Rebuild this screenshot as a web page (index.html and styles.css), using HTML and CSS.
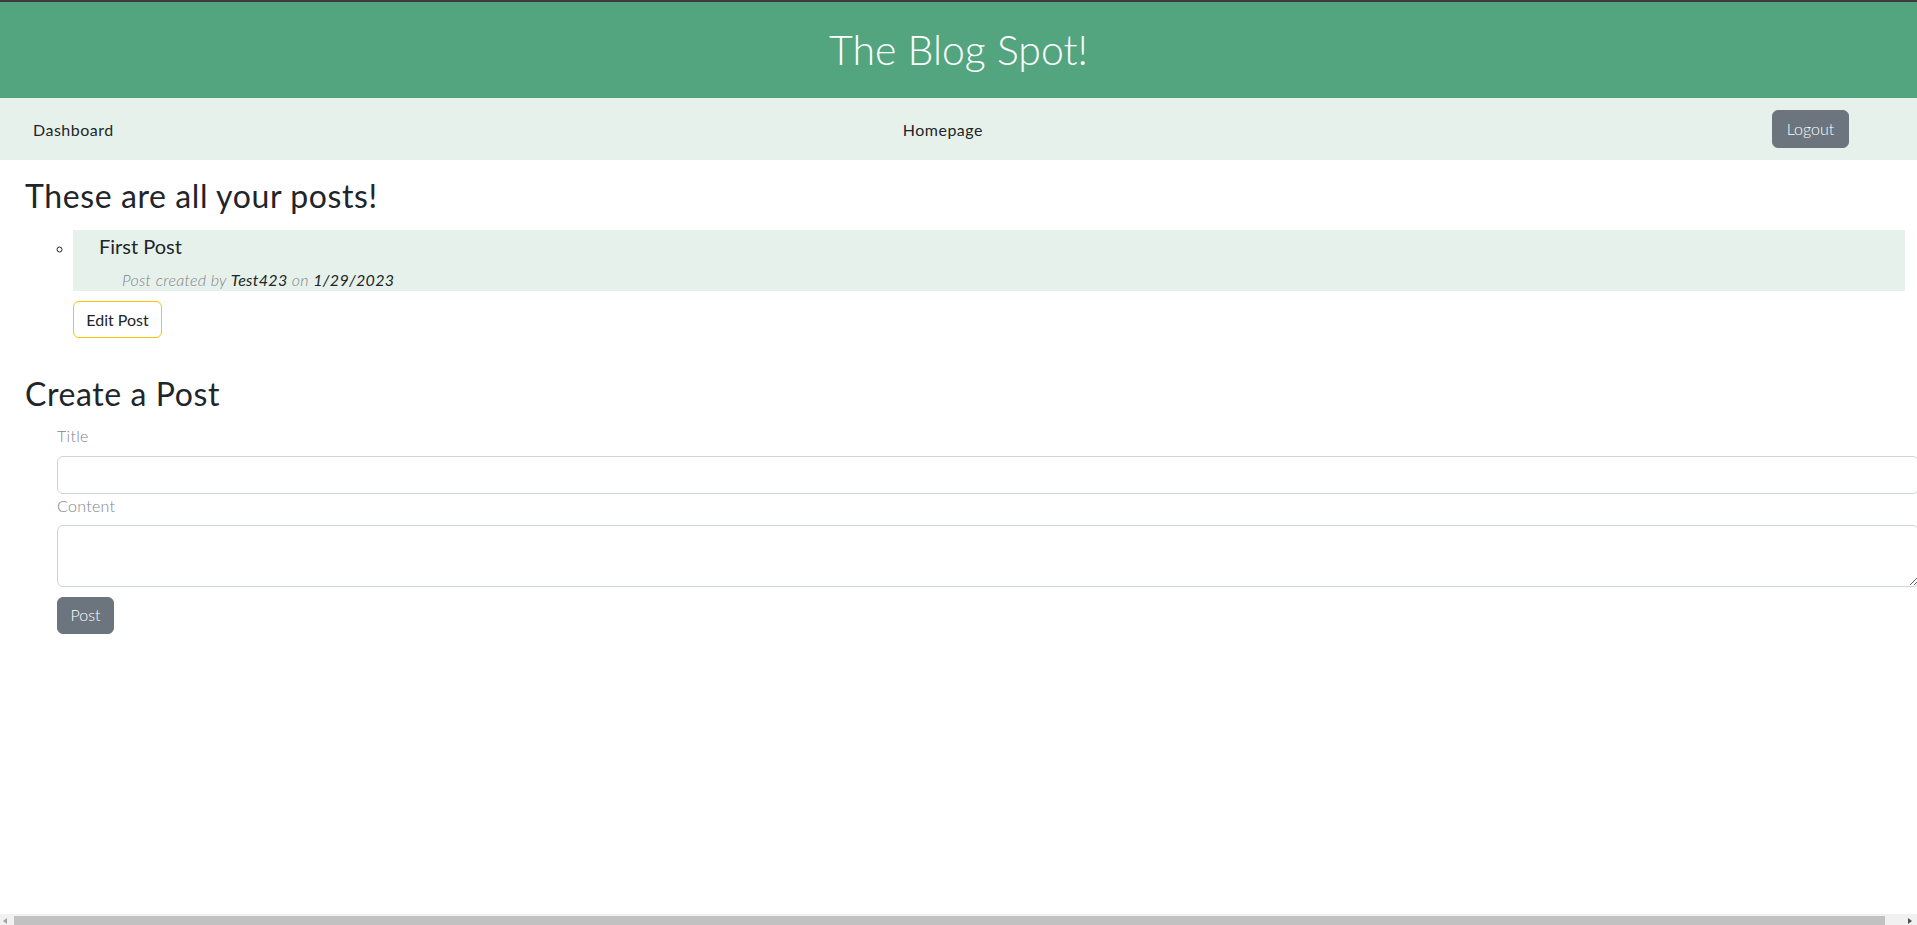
FILE: index.html
```html
<!DOCTYPE html>
<html lang="en">
<head>
<meta charset="utf-8">
<title>The Blog Spot!</title>
<link rel="stylesheet" href="styles.css">
</head>
<body>
<header class="site-header">
  <h1 class="site-title">The Blog Spot!</h1>
</header>
<nav class="site-nav">
  <a class="nav-link" href="#">Dashboard</a>
  <a class="nav-link" href="#">Homepage</a>
  <button class="btn btn-grey btn-logout" type="button">Logout</button>
</nav>
<main class="main">
  <h2 class="section-title">These are all your posts!</h2>
  <ul class="post-list">
    <li class="post-item">
      <div class="post-card">
        <h3 class="post-title">First Post</h3>
        <p class="post-meta">Post created by <span class="meta-strong">Test423</span> on <span class="meta-strong">1/29/2023</span></p>
      </div>
      <button class="btn btn-outline-warning" type="button">Edit Post</button>
    </li>
  </ul>
  <h2 class="section-title create-title">Create a Post</h2>
  <form class="post-form">
    <label class="form-label" for="title">Title</label>
    <input class="form-control form-input" id="title" type="text">
    <label class="form-label" for="content">Content</label>
    <textarea class="form-control form-textarea" id="content"></textarea>
    <button class="btn btn-grey btn-post" type="button">Post</button>
  </form>
</main>
<div class="hscroll" aria-hidden="true">
  <span class="hscroll-arrow hscroll-left"></span>
  <span class="hscroll-thumb"></span>
  <span class="hscroll-arrow hscroll-right"></span>
</div>
</body>
</html>
```
FILE: styles.css
```css
* { box-sizing: border-box; }

body {
  margin: 0;
  font-family: "Lato", "Open Sans", sans-serif;
  color: #212529;
  background: #fff;
}

.site-header {
  border-top: 2px solid #3c3c3c;
  background: #52a57f;
  height: 98px;
  display: flex;
  align-items: center;
  justify-content: center;
}

.site-title {
  margin: 0;
  font-size: 41px;
  font-weight: 300;
  color: #fff;
  line-height: 1.2;
}

.site-nav {
  background: #e7f1eb;
  height: 62px;
  display: flex;
  align-items: center;
  justify-content: space-between;
  padding: 0 68px 0 33px;
}

.nav-link {
  color: #212529;
  text-decoration: none;
  font-size: 16px;
  letter-spacing: 0.5px;
}

.btn {
  font-family: inherit;
  font-size: 16px;
  line-height: 1.5;
  border-radius: 6px;
  cursor: pointer;
}

.btn-grey {
  background: #6c757d;
  border: 1px solid #6c757d;
  color: #fff;
  font-weight: 300;
}

.btn-logout {
  width: 77px;
  height: 38px;
  padding: 0;
}

.main {
  padding: 0 12px 0 25px;
}

.section-title {
  margin: 0;
  font-size: 32px;
  font-weight: 400;
  line-height: 1.2;
  letter-spacing: 0.6px;
  padding-top: 17px;
  padding-bottom: 15px;
}

.post-list {
  margin: 0;
  padding-left: 48px;
  list-style: circle;
}

.post-item::marker {
  font-size: 14px;
}

.post-card {
  background: #e7f1eb;
  height: 61px;
  padding: 1px 0 0 26px;
}

.post-title {
  margin: 0;
  font-size: 20px;
  font-weight: 400;
  line-height: 1.5;
}

.post-meta {
  margin: 0;
  padding-left: 23px;
  padding-top: 9px;
  font-style: italic;
  font-weight: 300;
  font-size: 16px;
  letter-spacing: 0.3px;
  color: #7d858c;
}

.meta-strong {
  color: #212529;
  font-weight: 400;
}

.btn-outline-warning {
  margin-top: 10px;
  width: 89px;
  height: 37px;
  padding: 0;
  background: #fff;
  border: 1px solid #ffc107;
  color: #212529;
}

.create-title {
  padding-top: 37px;
  padding-bottom: 12px;
}

.post-form {
  margin: 0 -35px 0 32px;
  padding-right: 21px;
  display: flex;
  flex-direction: column;
  align-items: flex-start;
}

.form-label {
  font-size: 16px;
  font-weight: 300;
  color: #7d858c;
  letter-spacing: 0.3px;
}

.form-control {
  width: 100%;
  border: 1px solid #ced4da;
  border-radius: 6px;
  font-family: inherit;
  font-size: 16px;
  padding: 6px 12px;
}

.form-input {
  height: 38px;
  margin-top: 11px;
  margin-bottom: 2px;
}

.form-textarea {
  height: 62px;
  margin-top: 10px;
  margin-bottom: 10px;
  resize: vertical;
}

.btn-post {
  width: 57px;
  height: 37px;
  padding: 0;
}

.hscroll {
  position: fixed;
  left: 0;
  right: 0;
  bottom: 0;
  height: 11px;
  background: #f1f1f1;
  display: flex;
  align-items: flex-end;
}

.hscroll-thumb {
  margin-left: 7px;
  width: 1871px;
  height: 9px;
  background: #c1c1c1;
}

.hscroll-arrow {
  width: 0;
  height: 0;
  border-top: 3px solid transparent;
  border-bottom: 3px solid transparent;
  margin-bottom: 1px;
}

.hscroll-left {
  margin-left: 3px;
  border-right: 4px solid #a3a3a3;
}

.hscroll-right {
  margin-left: 23px;
  border-left: 4px solid #505050;
}
```
